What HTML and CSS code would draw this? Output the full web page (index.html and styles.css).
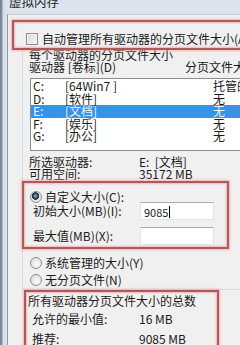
FILE: index.html
```html
<!DOCTYPE html>
<html lang="zh-CN">
<head>
  <meta charset="UTF-8" />
  <meta name="viewport" content="width=device-width, initial-scale=1.0"/>
  <title>虚拟内存</title>
  <link rel="stylesheet" href="styles.css">
</head>
<body>

<div class="window">
  <div class="titlebar"><span class="title">虚拟内存</span></div>

  <div class="client">
    <!-- 自动管理 -->
    <div class="mark mark-auto">
      <div class="check-row"><span class="checkbox"></span>自动管理所有驱动器的分页文件大小(A)</div>
    </div>

    <div class="group">
      <div class="group-title">每个驱动器的分页文件大小</div>
      <div class="list-head"><span>驱动器 [卷标](D)</span><span>分页文件大小(MB)</span></div>

      <div class="drive-list">
        <div class="drive"><span>C:</span><span>[64Win7 ]</span><span>托管的</span></div>
        <div class="drive"><span>D:</span><span>[软件]</span><span>无</span></div>
        <div class="drive selected"><span>E:</span><span>[文档]</span><span>无</span></div>
        <div class="drive"><span>F:</span><span>[娱乐]</span><span>无</span></div>
        <div class="drive"><span>G:</span><span>[办公]</span><span>无</span></div>
      </div>

      <div class="info"><span>所选驱动器:</span><span>E:&nbsp; [文档]</span></div>
      <div class="info"><span>可用空间:</span><span>35172 MB</span></div>

      <!-- 自定义大小 -->
      <div class="mark mark-custom">
        <div class="radio-row"><span class="radio on"></span>自定义大小(C):</div>
        <div class="field field-first"><span>初始大小(MB)(I):</span><span class="input">9085<i class="caret"></i></span></div>
        <div class="field"><span>最大值(MB)(X):</span><span class="input"></span></div>
      </div>

      <div class="radio-row plain first"><span class="radio"></span>系统管理的大小(Y)</div>
      <div class="radio-row plain"><span class="radio"></span>无分页文件(N)</div>
    </div>

    <!-- 总数 -->
    <div class="mark mark-total">
      <div class="total-title">所有驱动器分页文件大小的总数</div>
      <div class="info total-row"><span>允许的最小值:</span><span>16 MB</span></div>
      <div class="info total-row last"><span>推荐:</span><span>9085 MB</span></div>
    </div>
  </div>
</div>

</body>
</html>
```

FILE: styles.css
```css
body {
  margin: 0;
  width: 240px;
  height: 345px;
  overflow: hidden;
  font-family: "Noto Sans CJK SC", sans-serif;
  font-size: 12px;
  line-height: 12px;
  color: #1b1b1b;
}

.window {
  display: flex;
  flex-direction: column;
  width: 320px;
  height: 345px;
  background: linear-gradient(90deg, #71808c 0, #8796a2 2px, #d3dde7 3px, #dbe4ec 7px);
}

.titlebar {
  flex-shrink: 0;
  height: 14px;
  padding-left: 9px;
  overflow: hidden;
}

.title {
  display: block;
  margin-top: -5px;
  font-size: 12.5px;
  line-height: 14px;
  color: #202020;
}

.client {
  flex: 1;
  min-height: 0;
  overflow: hidden;
  margin-left: 7px;
  padding: 5px 0 0 4px;
  background: #f0f0f0;
  border-left: 1px solid #8d9aa6;
  border-top: 1px solid #c3ced8;
}

/* red highlight frames */
.mark {
  border: 2px solid #b1585b;
  box-shadow: 0 0 2px 1px rgba(232, 160, 160, 0.7), inset 0 0 2px 1px rgba(232, 160, 160, 0.7);
  position: relative;
  z-index: 1;
}

.mark-auto {
  box-sizing: border-box;
  height: 30px;
  padding: 11px 0 0 12px;
  margin-bottom: -1px;
}

.check-row {
  display: flex;
  align-items: center;
  gap: 4px;
  white-space: nowrap;
}

.checkbox {
  width: 12px;
  height: 12px;
  box-sizing: border-box;
  border: 1px solid #8f8f8f;
  background: linear-gradient(135deg, #d7d7d7, #f7f7f7);
  box-shadow: inset 0 0 0 1px #f4f4f4;
}

.group {
  margin-left: 10px;
  padding-left: 6px;
  border-left: 1px solid #d6dde3;
  padding-bottom: 3px;
  border-bottom: 1px solid #d6dde3;
}

.group-title {
  white-space: nowrap;
}

.list-head {
  display: grid;
  grid-template-columns: 156px auto;
  white-space: nowrap;
}

.drive-list {
  margin: 5px 0 0 1px;
  height: 73px;
  box-sizing: border-box;
  padding-top: 1px;
  background: #fff;
  border: 1px solid #8a8e96;
}

.drive {
  display: grid;
  grid-template-columns: 32px 148px auto;
  padding-left: 2px;
  height: 12.6px;
  line-height: 12px;
  white-space: nowrap;
}

.drive.selected {
  background: #3792ea;
  color: #e8f6ff;
}

.info {
  display: grid;
  grid-template-columns: 110px auto;
  white-space: nowrap;
}

.drive-list + .info {
  margin-top: 5px;
}

.mark-custom {
  margin-left: -7px;
  width: 207px;
  box-sizing: border-box;
  padding: 8px 0 1px 6px;
  margin-top: 1px;
}

.radio-row {
  display: flex;
  align-items: center;
  gap: 3px;
  white-space: nowrap;
}

.radio {
  width: 12px;
  height: 12px;
  box-sizing: border-box;
  border-radius: 50%;
  border: 1px solid #8e8f8f;
  background: radial-gradient(circle at 60% 65%, #fdfdfd 0, #e2e2e2 70%);
}

.radio.on {
  background: radial-gradient(circle at 45% 40%, #9fb4c9 0, #2c4760 2.5px, #17283a 3.5px, #e4e4e4 4px, #f6f6f6 100%);
}

.field {
  display: grid;
  grid-template-columns: 107px 74px;
  align-items: center;
  height: 20px;
  margin-top: 5px;
  padding-left: 3px;
  white-space: nowrap;
}

.field-first {
  margin-top: -2px;
}

.input {
  height: 18px;
  box-sizing: border-box;
  padding: 3px 0 0 3px;
  background: #fff;
  border: 1px solid #e0e6ec;
  border-top-color: #a9adb4;
  font-size: 11px;
  line-height: 12px;
}

.caret {
  display: inline-block;
  width: 1px;
  height: 12px;
  margin-left: 1px;
  vertical-align: top;
  background: #000;
}

.radio-row.plain {
  padding-left: 1px;
  margin-top: 5px;
}

.radio-row.plain.first {
  margin-top: 8px;
}

.mark-total {
  margin: 0 0 0 12px;
  width: 195px;
  box-sizing: border-box;
  padding: 3px 0 0 2px;
  height: 80px;
}

.total-title {
  white-space: nowrap;
}

.total-row {
  grid-template-columns: 107px auto;
  padding-left: 4px;
  margin-top: 6px;
}

.total-row.last {
  margin-top: 8px;
}
```
